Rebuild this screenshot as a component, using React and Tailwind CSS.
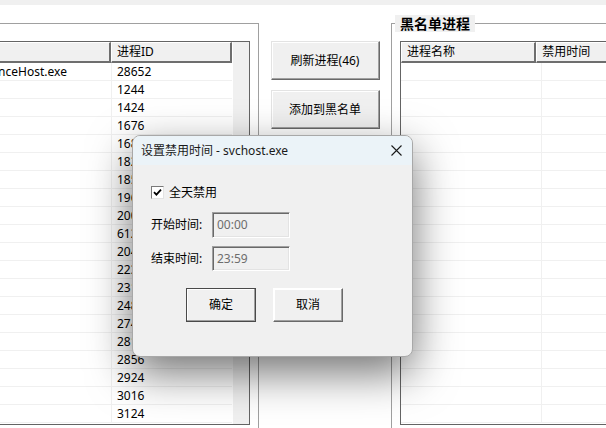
import React from "react";

const leftRows = [
  ["PhoneExperienceHost.exe", "28652"],
  ["", "1244"],
  ["", "1424"],
  ["", "1676"],
  ["", "1688"],
  ["", "1820"],
  ["", "1856"],
  ["", "1964"],
  ["", "2008"],
  ["", "6124"],
  ["", "2044"],
  ["", "2232"],
  ["", "2316"],
  ["", "2480"],
  ["", "2744"],
  ["", "2812"],
  ["", "2856"],
  ["", "2924"],
  ["", "3016"],
  ["", "3124"],
];

const hdr =
  "h-[21px] bg-[#f0f0f0] border-t border-l border-t-white border-l-white border-r-2 border-b-2 border-r-[#6e6e6e] border-b-[#6e6e6e] leading-[18px] whitespace-nowrap";

const winBtn =
  "flex items-center justify-center bg-[#f0f0f0] border border-t-[#e3e3e3] border-l-[#e3e3e3] border-r-[#696969] border-b-[#696969] shadow-[inset_-1px_-1px_#a0a0a0,inset_1px_1px_#ffffff] text-[12px] text-black";

function LeftList() {
  return (
    <div className="flex h-[384px] border border-[#646464] bg-white">
      <div className="flex flex-col w-[312px]">
        <div className="flex">
          <div className={hdr + " w-[191px] pl-[5px]"}></div>
          <div className={hdr + " w-[121px] pl-[5px]"}>进程ID</div>
        </div>
        {leftRows.map(([n, id], i) => (
          <div key={i} className="flex h-[18px] border-b border-[#f0f0f0]">
            <div className="w-[192px] shrink-0 border-r border-[#f0f0f0] whitespace-nowrap overflow-hidden leading-[17px]">
              {n}
            </div>
            <div className="w-[120px] pl-[5px] leading-[17px]">{id}</div>
          </div>
        ))}
      </div>
      <div className="w-[17px] shrink-0 bg-[#f0f0f0] border-l border-white" />
    </div>
  );
}

function RightList() {
  return (
    <div className="flex flex-col h-[384px] border border-[#646464] border-r-0 bg-white">
      <div className="flex">
        <div className={hdr + " w-[140px] pl-[5px]"}>进程名称</div>
        <div className={hdr + " w-[160px] pl-[5px]"}>禁用时间</div>
      </div>
      {Array.from({ length: 20 }).map((_, i) => (
        <div key={i} className="flex h-[18px] border-b border-[#f0f0f0]">
          <div className="w-[141px] shrink-0 border-r border-[#f0f0f0]" />
          <div className="flex-1" />
        </div>
      ))}
    </div>
  );
}

function Dialog() {
  return (
    <div className="absolute left-[132px] top-[135px] w-[281px] h-[222px] rounded-[8px] border border-[#a8a8a8] bg-[#f0f0f0] overflow-hidden shadow-[0_16px_44px_rgba(0,0,0,0.55)]">
      <div className="h-[29px] bg-[#ebf3f8] flex items-center justify-between pl-[8px] pr-[10px]">
        <span className="text-[12px] leading-[16px] text-[#1a1a1a]">设置禁用时间 - svchost.exe</span>
        <svg width="11" height="11" viewBox="0 0 11 11">
          <path d="M0.5 0.5 L10.5 10.5 M10.5 0.5 L0.5 10.5" stroke="#1a1a1a" strokeWidth="1.1" fill="none" />
        </svg>
      </div>
      <div className="flex flex-col pl-[18px] pt-[21px] text-[12px] text-black">
        <div className="flex items-center h-[13px] gap-[5px]">
          <div className="w-[13px] h-[13px] bg-white border border-t-[#7a7a7a] border-l-[#7a7a7a] border-r-[#e3e3e3] border-b-[#e3e3e3] flex items-center justify-center">
            <svg width="9" height="9" viewBox="0 0 9 9">
              <path d="M1 4.2 L3.4 6.6 L8 1.6" stroke="#000" strokeWidth="1.8" fill="none" />
            </svg>
          </div>
          <span className="leading-[16px]">全天禁用</span>
        </div>
        <div className="flex items-center mt-[13px] h-[26px]">
          <span className="w-[61px] leading-[16px]">开始时间:</span>
          <div className="w-[78px] h-[26px] bg-[#f0f0f0] border border-t-[#a0a0a0] border-l-[#a0a0a0] border-r-white border-b-white shadow-[inset_1px_1px_#696969,inset_-1px_-1px_#e3e3e3] pl-[4px] flex items-center text-[#6d6d6d]">
            00:00
          </div>
        </div>
        <div className="flex items-center mt-[8px] h-[25px]">
          <span className="w-[61px] leading-[16px]">结束时间:</span>
          <div className="w-[78px] h-[25px] bg-[#f0f0f0] border border-t-[#a0a0a0] border-l-[#a0a0a0] border-r-white border-b-white shadow-[inset_1px_1px_#696969,inset_-1px_-1px_#e3e3e3] pl-[4px] flex items-center text-[#6d6d6d]">
            23:59
          </div>
        </div>
        <div className="flex gap-[17px] mt-[17px] pl-[35px]">
          <div className="w-[70px] h-[34px] flex items-center justify-center bg-[#f0f0f0] border border-[#4a4a4a] shadow-[inset_-1px_-1px_#a0a0a0,inset_1px_1px_#ffffff]">
            确定
          </div>
          <div className={winBtn + " w-[70px] h-[34px] border-t-white border-l-white"}>取消</div>
        </div>
      </div>
    </div>
  );
}

export default function App() {
  return (
    <div className="relative w-[606px] h-[428px] overflow-hidden bg-white text-[12px] text-black font-['Noto_Sans','Noto_Sans_CJK_SC',sans-serif]">
      <div className="h-[5px] bg-[#f0f0f0]" />
      <div className="flex pt-[18px]">
        <div className="shrink-0 ml-[-90px] w-[349px] h-[420px] border-t border-l border-r border-[#a0a0a0] pt-[17px] px-[8px]">
          <LeftList />
        </div>
        <div className="shrink-0 w-[132px] flex flex-col items-center pt-[18px] gap-[10px]">
          <div className={winBtn + " w-[109px] h-[39px]"}>刷新进程(46)</div>
          <div className={winBtn + " w-[109px] h-[39px]"}>添加到黑名单</div>
        </div>
        <div className="relative shrink-0 w-[300px] h-[420px] border-t border-l border-[#a0a0a0] pt-[17px] pl-[8px]">
          <div className="absolute left-[3px] top-[-9px] bg-[#f0f0f0] px-[5px] h-[17px] text-[14px] font-bold leading-[17px] font-['Noto_Sans_CJK_SC',sans-serif]">
            黑名单进程
          </div>
          <RightList />
        </div>
      </div>
      <Dialog />
    </div>
  );
}
